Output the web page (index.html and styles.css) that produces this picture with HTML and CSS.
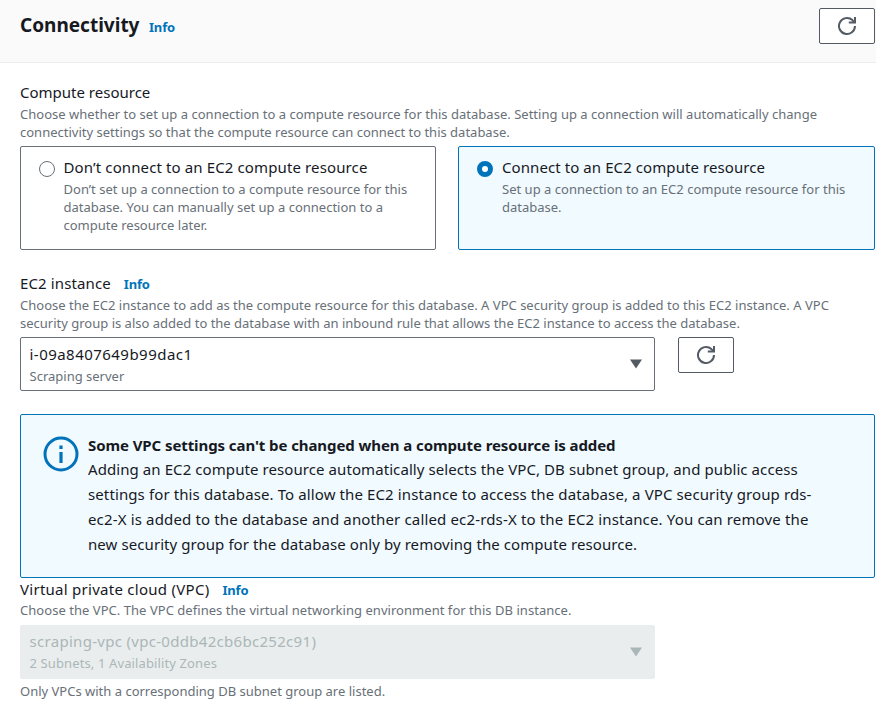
FILE: index.html
```html
<!DOCTYPE html>
<html lang="en">
<head>
<meta charset="utf-8">
<title>Connectivity</title>
<link rel="stylesheet" href="styles.css">
</head>
<body>
<svg width="0" height="0" class="defs">
  <symbol id="refresh" viewBox="0 0 20 20">
    <path d="M18 10a8 8 0 1 1-2.6-5.9l1.8 1.8" fill="none" stroke="currentColor" stroke-width="2"/>
    <path d="M18 1v5.6h-6.2" fill="none" stroke="currentColor" stroke-width="2"/>
  </symbol>
</svg>
<header class="panel-header">
  <div class="heading"><h2>Connectivity</h2><a class="info">Info</a></div>
  <button class="icon-button"><svg width="20" height="20"><use href="#refresh"/></svg></button>
</header>
<main class="panel-body">
  <section class="field compute">
    <div class="label">Compute resource</div>
    <p class="hint"><span class="s2">Choose whether to set up a connection to a compute resource for this database. Setting up a connection will automatically change</span><br>connectivity settings so that the compute resource can connect to this database.</p>
    <div class="tiles">
      <div class="tile">
        <span class="radio"></span>
        <div><div class="label s12">Don’t connect to an EC2 compute resource</div>
        <p class="hint"><span class="s2">Don’t set up a connection to a compute resource for this</span><br>database. You can manually set up a connection to a<br>compute resource later.</p></div>
      </div>
      <div class="tile selected">
        <span class="radio"></span>
        <div><div class="label s8">Connect to an EC2 compute resource</div>
        <p class="hint"><span class="s2">Set up a connection to an EC2 compute resource for this</span><br>database.</p></div>
      </div>
    </div>
  </section>
  <section class="field instance">
    <div class="label"><span class="s12">EC2 instance</span><a class="info">Info</a></div>
    <p class="hint"><span class="s1">Choose the EC2 instance to add as the compute resource for this database. A VPC security group is added to this EC2 instance. A VPC</span><br>security group is also added to the database with an inbound rule that allows the EC2 instance to access the database.</p>
    <div class="select-row">
      <div class="select">
        <div><div class="value instance-id">i-09a8407649b99dac1</div><div class="hint">Scraping server</div></div>
        <svg class="caret" width="12" height="10"><path d="M0 0.5h12L6 9.5z" fill="currentColor"/></svg>
      </div>
      <button class="icon-button"><svg width="20" height="20"><use href="#refresh"/></svg></button>
    </div>
  </section>
  <section class="alert">
    <svg class="alert-icon" width="36" height="36" fill="none" stroke="currentColor"><circle cx="18" cy="18" r="16" stroke-width="3"/><path d="M18 9.5v3.5M18 16v11" stroke-width="3.2"/></svg>
    <div>
      <div class="alert-title">Some VPC settings can't be changed when a compute resource is added</div>
      <p class="alert-text"><span class="s8">Adding an EC2 compute resource automatically selects the VPC, DB subnet group, and public access</span><br><span class="s11">settings for this database. To allow the EC2 instance to access the database, a VPC security group rds-</span><br><span class="s15">ec2-X is added to the database and another called ec2-rds-X to the EC2 instance. You can remove the</span><br><span class="s8">new security group for the database only by removing the compute resource.</span></p>
    </div>
  </section>
  <section class="field vpc">
    <div class="label"><span class="s27">Virtual private cloud (VPC)</span><a class="info">Info</a></div>
    <p class="hint s4">Choose the VPC. The VPC defines the virtual networking environment for this DB instance.</p>
    <div class="select disabled">
      <div><div class="value s31">scraping-vpc (vpc-0ddb42cb6bc252c91)</div><div class="hint s12">2 Subnets, 1 Availability Zones</div></div>
      <svg class="caret" width="12" height="10"><path d="M0 0.5h12L6 9.5z" fill="currentColor"/></svg>
    </div>
    <p class="hint note">Only VPCs with a corresponding DB subnet group are listed.</p>
  </section>
</main>
</body>
</html>
```
FILE: styles.css
```css
* { box-sizing: border-box; }
body { margin: 0; width: 876px; height: 712px; overflow: hidden; background: #fff; color: #16191f; font: 15px/22px "Noto Sans", sans-serif; }
p, h2 { margin: 0; }
.defs { display: none; }

.panel-header { display: flex; justify-content: space-between; align-items: flex-start; height: 63px; padding: 8px 1px 0 20px; background: #fafafa; border-bottom: 1px solid #eaeded; }
.heading { display: flex; align-items: baseline; padding-top: 3px; }
h2 { font-size: 19px; line-height: 28px; font-weight: 700; }
.info { margin-left: 9.5px; font-size: 13px; font-weight: 700; letter-spacing: -0.17px; color: #0073bb; }
.label .info { margin-left: 13px; }

.icon-button { display: flex; align-items: center; justify-content: center; width: 56px; height: 36px; padding: 0; background: #fff; border: 1px solid #545b64; border-radius: 2px; color: #545b64; }

.panel-body { padding: 18px 1px 0 20px; }
.label { height: 22px; white-space: nowrap; }
.hint { font-size: 13px; line-height: 18px; color: #687078; white-space: nowrap; }
.label + .hint { margin-top: 2px; }

.tiles { display: grid; grid-template-columns: 416px 417px; gap: 22px; margin-top: 5px; }
.tile { display: flex; gap: 9px; height: 104px; padding: 9px 17.5px; border: 1px solid #687078; border-radius: 2px; }
.tile.selected { padding: 9px 18px; background: #f1faff; border-color: #0073bb; }
.radio { flex: none; width: 16px; height: 16px; margin-top: 5px; border: 1px solid #687078; border-radius: 50%; background: #fff; }
.selected .radio { border: 5px solid #0073bb; }

.instance { margin-top: 22px; }
.select-row { display: flex; gap: 23px; align-items: flex-start; margin-top: 5px; }
.select { display: flex; justify-content: space-between; align-items: flex-start; width: 635px; height: 54px; padding: 5px 12px 0 8.5px; border: 1px solid #687078; border-radius: 2px; }
.select .value { line-height: 22px; white-space: nowrap; }
.select .hint { margin-top: 2px; }
.instance-id { letter-spacing: 0.465px; }
.caret { margin-top: 16px; color: #545b64; }

.alert { display: flex; gap: 9px; height: 164px; margin-top: 23px; padding: 20px 22px; background: #f1faff; border: 1px solid #0073bb; border-radius: 2px; }
.alert-icon { flex: none; margin-top: 1px; color: #0073bb; }
.alert-title { height: 22px; line-height: 20px; font-weight: 700; letter-spacing: -0.085px; white-space: nowrap; }
.alert-text { line-height: 25px; white-space: nowrap; }

.vpc .label + .hint { margin-top: 1px; }
.select.disabled { margin-top: 6px; padding-top: 4px; background: #eaeded; border-color: #eaeded; color: #aab7b8; }
.disabled .hint, .disabled .caret { color: #aab7b8; }
.disabled .caret { margin-top: 17px; }
.note { margin-top: 3px; }

.s1 { letter-spacing: 0.012px; }
.s2 { letter-spacing: 0.018px; }
.s4 { letter-spacing: 0.041px; }
.s8 { letter-spacing: 0.08px; }
.s11 { letter-spacing: 0.111px; }
.s12 { letter-spacing: 0.12px; }
.s15 { letter-spacing: 0.15px; }
.s27 { letter-spacing: 0.27px; }
.s31 { letter-spacing: 0.3px; }
```
